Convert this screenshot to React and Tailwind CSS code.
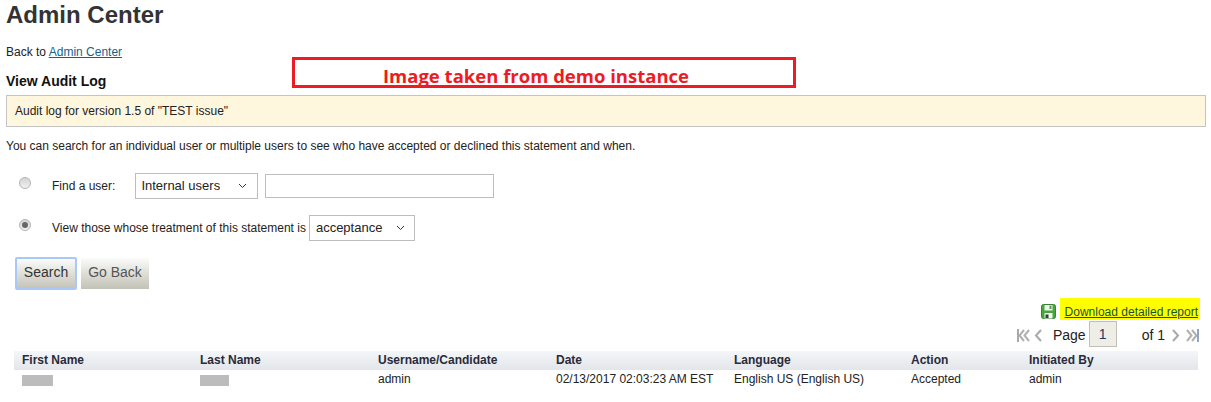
import React from "react";

function Chevron() {
  return (
    <svg width="9" height="6" viewBox="0 0 9 6" className="ml-auto shrink-0">
      <path d="M1 1l3.5 3.5L8 1" fill="none" stroke="#333" strokeWidth="1" />
    </svg>
  );
}

function Radio({ checked }) {
  return (
    <span className="flex h-[12px] w-[12px] shrink-0 items-center justify-center rounded-full border border-[#b4b4b4] bg-gradient-to-b from-[#d4d4d4] to-[#f0f0f0]">
      {checked && <span className="h-[6px] w-[6px] rounded-full bg-[#666]" />}
    </span>
  );
}

function Save() {
  return (
    <svg width="15" height="15" viewBox="0 0 15 15" className="mt-[6px] shrink-0">
      <rect x="0.5" y="0.5" width="14" height="14" rx="2" fill="#46a83a" stroke="#35852e" />
      <rect x="3.5" y="1" width="8" height="5.5" fill="#eef2ee" />
      <rect x="8.5" y="1.5" width="2" height="3.5" fill="#6f8f6f" />
      <rect x="3.5" y="9" width="8" height="5.5" fill="#f4f4f4" />
      <rect x="4.5" y="10.5" width="3" height="3.5" fill="#3a3a3a" />
    </svg>
  );
}

function Pager({ dir }) {
  const d = dir === "l" ? "M8 2L3.5 7.5 8 13M13 2L8.5 7.5 13 13" : "M3 2l4.5 5.5L3 13M8 2l4.5 5.5L8 13";
  return (
    <svg width="16" height="15" viewBox="0 0 16 15" className="block shrink-0">
      <path d={d} fill="none" stroke="#b0b0b0" strokeWidth="2" />
      {dir === "l" ? (
        <rect x="1" y="1" width="2" height="13" fill="#a9a9a9" />
      ) : (
        <rect x="13" y="1" width="2" height="13" fill="#8fa6c4" />
      )}
    </svg>
  );
}

function One({ dir }) {
  return (
    <svg width="10" height="15" viewBox="0 0 10 15" className="block shrink-0">
      <path d={dir === "l" ? "M8 2L3 7.5 8 13" : "M2 2l5 5.5L2 13"} fill="none" stroke="#a9a9a9" strokeWidth="2" />
    </svg>
  );
}

const cols = "grid grid-cols-[178px_178px_178px_178px_177px_118px_169px] pl-[8px]";

export default function App() {
  return (
    <div className="relative h-[402px] w-[1211px] overflow-hidden bg-white font-['Liberation_Sans',Arial,sans-serif] text-[12px] text-[#222]">
      <div className="px-[6px]">
        <h1 className="pt-[1px] text-[24px] font-bold leading-[28px] text-[#333]">Admin Center</h1>
        <p className="mt-[16px] leading-[14px]">
          Back to <a href="#" className="text-[#1a5f8a] underline">Admin Center</a>
        </p>
        <h2 className="mt-[14px] text-[14px] font-bold leading-[16px] text-[#111]">View Audit Log</h2>
        <div className="-mr-[1px] mt-[6px] flex h-[32px] items-center border border-[#c4c4c4] bg-[#fff6de] pl-[8px]">
          Audit log for version 1.5 of "TEST issue"
        </div>
        <p className="mt-[12px] leading-[14px]">
          You can search for an individual user or multiple users to see who have accepted or declined this statement and when.
        </p>

        <div className="mt-[20px] flex h-[26px] items-center pl-[13px]">
          <span className="-mt-[6px]"><Radio /></span>
          <span className="ml-[21px]">Find a user:</span>
          <div className="ml-[20px] flex h-[26px] w-[123px] items-center border border-[#bdbdbd] bg-white pl-[5px] pr-[10px] text-[13px]">
            Internal users
            <Chevron />
          </div>
          <div className="ml-[7px] h-[24px] w-[229px] border border-[#bdbdbd] bg-white" />
        </div>

        <div className="mt-[16px] flex h-[26px] items-center pl-[13px]">
          <span className="-mt-[6px]"><Radio checked /></span>
          <span className="ml-[21px]">View those whose treatment of this statement is</span>
          <div className="ml-[3px] flex h-[26px] w-[106px] items-center border border-[#bdbdbd] bg-white pl-[6px] pr-[9px] text-[13px]">
            acceptance
            <Chevron />
          </div>
        </div>

        <div className="mt-[16px] flex items-center gap-[4px] pl-[9px]">
          <button className="flex h-[33px] w-[62px] items-center justify-center rounded-[2px] border-2 border-[#a8c8f8] bg-gradient-to-b from-[#fbfbfa] to-[#c4c4b9] pb-[2px] text-[14px] text-[#333]">
            Search
          </button>
          <button className="flex h-[31px] w-[68px] items-center justify-center bg-gradient-to-b from-[#fbfbfa] to-[#c2c2b6] pb-[3px] text-[14px] text-[#555]">
            Go Back
          </button>
        </div>

        <div className="mt-[8px] flex h-[22px] items-start justify-end pr-[5px]">
          <Save />
          <span className="ml-[4px] flex h-[22px] items-center bg-[#ffff00] pl-[5px] pr-[2px] pt-[5px] text-[#14552f] underline">Download detailed report</span>
        </div>

        <div className="mt-[1px] flex h-[26px] items-center justify-end pr-[5px] text-[14px]">
          <span className="pt-[2px]"><Pager dir="l" /></span>
          <span className="ml-[1px] pt-[2px]"><One dir="l" /></span>
          <span className="ml-[10px] pt-[2px]">Page</span>
          <span className="ml-[3px] flex h-[26px] w-[28px] items-center justify-center border border-[#c0c0b4] bg-[#eeeee6] text-[#1a3a6a]">1</span>
          <span className="ml-[25px] pt-[2px]">of 1</span>
          <span className="ml-[6px] pt-[2px]"><One dir="r" /></span>
          <span className="ml-[3px] pt-[2px]"><Pager dir="r" /></span>
        </div>

        <div className="ml-[8px] mr-[7px] mt-[4px]">
          <div className={`${cols} h-[19px] items-center bg-gradient-to-b from-[#f4f6f8] to-[#e2e6ea] pb-[2px] font-bold text-[#2a2a3a]`}>
            <span>First Name</span>
            <span>Last Name</span>
            <span>Username/Candidate</span>
            <span>Date</span>
            <span>Language</span>
            <span>Action</span>
            <span>Initiated By</span>
          </div>
          <div className={`${cols} h-[19px] items-center pb-[2px]`}>
            <span className="mt-[2px] block h-[11px] w-[31px] bg-[#bcbcbc]" />
            <span className="mt-[2px] block h-[11px] w-[29px] bg-[#bcbcbc]" />
            <span>admin</span>
            <span>02/13/2017 02:03:23 AM EST</span>
            <span>English US (English US)</span>
            <span>Accepted</span>
            <span>admin</span>
          </div>
        </div>
      </div>

      <div className="absolute left-[292px] top-[57px] flex h-[31px] w-[504px] items-end justify-center overflow-hidden border-[3px] border-[#ed1c24] pr-[16px] font-['Open_Sans',sans-serif] text-[18.5px] font-bold leading-[24px] text-[#ed1c24]">
        <span className="mb-[-3px]">Image taken from demo instance</span>
      </div>
    </div>
  );
}
